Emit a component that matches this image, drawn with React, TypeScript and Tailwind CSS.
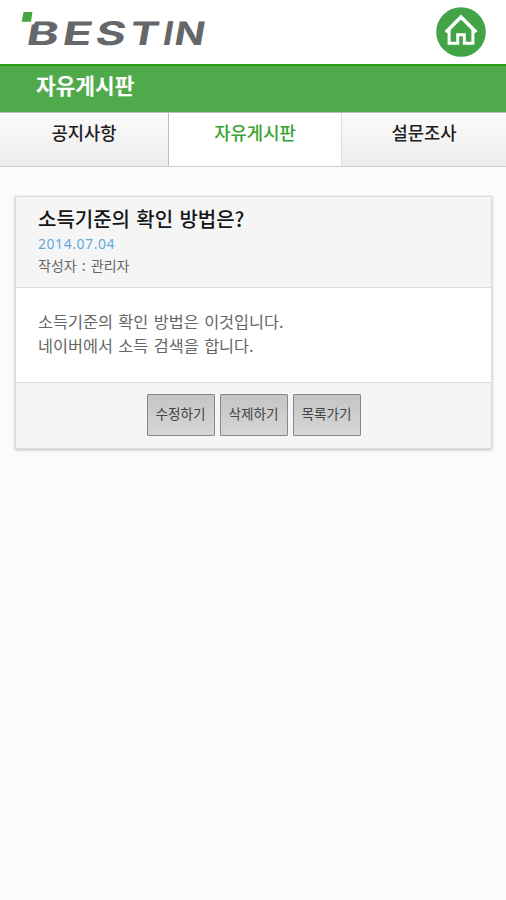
import { clsx } from "clsx";

const tabs = [
  { label: "공지사항", width: "w-[169px]", active: false },
  { label: "자유게시판", width: "w-[173px]", active: true },
  { label: "설문조사", width: "w-[164px]", active: false },
];

const actions = ["수정하기", "삭제하기", "목록가기"];

// x offset and horizontal stretch of each logo letter
const logoLetters = [
  { char: "B", x: 5, stretch: 1.5 },
  { char: "E", x: 41, stretch: 1.5 },
  { char: "S", x: 74, stretch: 1.42 },
  { char: "T", x: 108, stretch: 1.34 },
  { char: "I", x: 141.5, stretch: 1.1 },
  { char: "N", x: 153, stretch: 1.22 },
];

function Logo() {
  return (
    <svg width="200" height="48" viewBox="0 0 200 48" className="overflow-visible" role="img" aria-label="BESTIN">
      {logoLetters.map(({ char, x, stretch }) => (
        <text
          key={char}
          transform={`translate(${x} 36.4) skewX(-10) scale(${stretch} 1)`}
          fontSize="32.5"
          fontWeight="700"
          fill="#66676b"
          className="font-['Inter','Liberation_Sans',sans-serif]"
        >
          {char}
        </text>
      ))}
      <path d="M7 12h9l-2.4 3.6h-2L10 18.5H7z" fill="#fff" />
      <path d="M3.6 3h8.8L11 12.8H1.6z" fill="#43a63f" />
    </svg>
  );
}

function HomeIcon() {
  return (
    <svg width="50" height="50" viewBox="0 0 50 50" fill="none">
      <circle cx="25" cy="25" r="24.8" fill="#43a447" />
      <path d="M9.8 25.2 25 10l15.2 15.2" stroke="#fff" strokeWidth="3.6" />
      <path d="M13.1 23v13.2h8.6v-8.4h6.6v8.4h8.6V23" stroke="#fff" strokeWidth="3" />
    </svg>
  );
}

export default function App() {
  return (
    <div className="min-h-[900px] w-full overflow-hidden bg-[#fbfbfb] font-['Noto_Sans_CJK_KR',sans-serif] whitespace-nowrap">
      <header className="flex h-16 items-start justify-between bg-white pt-[7px] pr-5 pl-5">
        <div className="pt-0.5">
          <Logo />
        </div>
        <button type="button" aria-label="홈">
          <HomeIcon />
        </button>
      </header>

      <div className="h-12 border-t-2 border-[#269d18] bg-[#50aa4c] pl-9">
        <h1 className="text-[21.4px] leading-[37px] font-bold text-white">자유게시판</h1>
      </div>

      <nav className="flex h-[55px] border-t border-b border-t-[#b5c3b5] border-b-[#cfcfcf]">
        {tabs.map((tab) => (
          <a
            key={tab.label}
            className={clsx(
              "block text-center text-[17.7px] leading-[39px] font-medium",
              tab.width,
              tab.active
                ? "border-r border-[#dcdcdc] bg-white text-[#37a32f]"
                : "bg-linear-to-b from-[#fbfbfb] to-[#ececec] text-[#202020] first:border-r first:border-[#bdbdbd]",
            )}
          >
            {tab.label}
          </a>
        ))}
      </nav>

      <article className="mt-[29px] mr-3.5 ml-[15px] border border-[#dcdcdc] bg-white shadow-[0_1px_3px_rgba(0,0,0,0.25)]">
        <div className="h-[91px] border-b border-[#dcdcdc] bg-[#f5f5f5] px-[22px] pt-2">
          <h2 className="text-[20px] leading-7 font-medium text-[#151515] [word-spacing:1.8px]">
            소득기준의 확인 방법은?
          </h2>
          <p className="font-['Noto_Sans',sans-serif] text-[14px] leading-[22px] tracking-[0.55px] text-[#62a9dc]">
            2014.07.04
          </p>
          <p className="text-[14px] leading-[21px] text-[#666] [word-spacing:2px]">작성자 : 관리자</p>
        </div>
        <div className="h-[94px] px-[22px] pt-[21px] text-[16.3px] leading-6 text-[#666] [word-spacing:1.8px]">
          <p>소득기준의 확인 방법은 이것입니다.</p>
          <p>네이버에서 소득 검색을 합니다.</p>
        </div>
        <div className="flex h-[66px] justify-center gap-[5px] border-t border-[#dcdcdc] bg-[#f5f5f5] pt-[11px]">
          {actions.map((label) => (
            <button
              key={label}
              type="button"
              className="h-[42px] w-[68px] rounded-[1px] border border-[#888] bg-linear-to-b from-[#c5c5c5] to-[#d6d6d6] pb-[3px] text-[13.6px] text-[#444]"
            >
              {label}
            </button>
          ))}
        </div>
      </article>
    </div>
  );
}
